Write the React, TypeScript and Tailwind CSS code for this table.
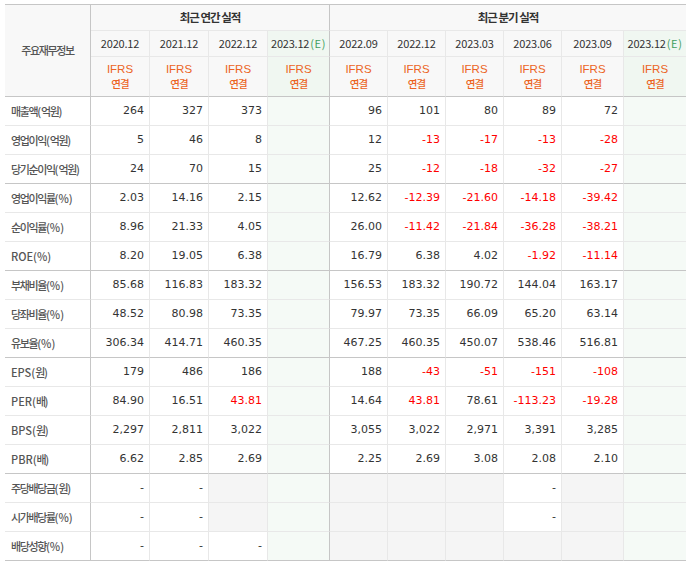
import React from "react";

type V = string | null | "G";

const rows: { label: string; v: V[]; thick?: boolean }[] = [
  { label: "매출액(억원)", v: ["264", "327", "373", null, "96", "101", "80", "89", "72", null] },
  { label: "영업이익(억원)", v: ["5", "46", "8", null, "12", "-13", "-17", "-13", "-28", null] },
  { label: "당기순이익(억원)", v: ["24", "70", "15", null, "25", "-12", "-18", "-32", "-27", null], thick: true },
  { label: "영업이익률(%)", v: ["2.03", "14.16", "2.15", null, "12.62", "-12.39", "-21.60", "-14.18", "-39.42", null] },
  { label: "순이익률(%)", v: ["8.96", "21.33", "4.05", null, "26.00", "-11.42", "-21.84", "-36.28", "-38.21", null] },
  { label: "ROE(%)", v: ["8.20", "19.05", "6.38", null, "16.79", "6.38", "4.02", "-1.92", "-11.14", null], thick: true },
  { label: "부채비율(%)", v: ["85.68", "116.83", "183.32", null, "156.53", "183.32", "190.72", "144.04", "163.17", null] },
  { label: "당좌비율(%)", v: ["48.52", "80.98", "73.35", null, "79.97", "73.35", "66.09", "65.20", "63.14", null] },
  { label: "유보율(%)", v: ["306.34", "414.71", "460.35", null, "467.25", "460.35", "450.07", "538.46", "516.81", null], thick: true },
  { label: "EPS(원)", v: ["179", "486", "186", null, "188", "-43", "-51", "-151", "-108", null] },
  { label: "PER(배)", v: ["84.90", "16.51", "43.81", null, "14.64", "43.81", "78.61", "-113.23", "-19.28", null] },
  { label: "BPS(원)", v: ["2,297", "2,811", "3,022", null, "3,055", "3,022", "2,971", "3,391", "3,285", null] },
  { label: "PBR(배)", v: ["6.62", "2.85", "2.69", null, "2.25", "2.69", "3.08", "2.08", "2.10", null], thick: true },
  { label: "주당배당금(원)", v: ["-", "-", "G", null, "G", "G", "G", "-", "G", null] },
  { label: "시가배당률(%)", v: ["-", "-", "G", null, "G", "G", "G", "-", "G", null] },
  { label: "배당성향(%)", v: ["-", "-", "-", null, "G", "G", "G", "G", "G", null], thick: true },
];

const redPositive = new Set(["10-2", "10-5"]);

const dates = ["2020.12", "2021.12", "2022.12", "2023.12", "2022.09", "2022.12", "2023.03", "2023.06", "2023.09", "2023.12"];

const KR = "font-['Noto_Sans_CJK_KR',sans-serif]";

function vBorder(i: number) {
  if (i === 3) return "border-r border-r-[#c6c6c6]";
  if (i === 9) return "";
  return "border-r border-r-[#e8e8e8]";
}

function Label({ text }: { text: string }) {
  const parts = text.split(/([가-힣]+)/).filter((p) => p.length > 0);
  return (
    <span>
      {parts.map((p, i) =>
        /[가-힣]/.test(p) ? (
          <span key={i} className="tracking-[-1.4px]">
            {p}
          </span>
        ) : (
          <span key={i} className="tracking-[0px]">
            {p}
          </span>
        )
      )}
    </span>
  );
}

export default function App() {
  return (
    <div className="bg-white w-[693px] h-[565px] pt-[4px] pl-[5px]">
      <div className="grid w-[681px] grid-cols-[86px_59px_59px_59px_62px_58px_58px_58px_58px_62px_62px] grid-rows-[26px_26px_40px_repeat(16,29px)] border-t border-t-[#c6c6c6] box-content">
        <div className={`row-span-3 bg-[#f8f8f8] border-r border-r-[#c6c6c6] border-b border-b-[#c6c6c6] flex items-center justify-center text-[#555] font-medium text-[11px] tracking-[-1.4px] ${KR}`}>
          주요재무정보
        </div>
        <div className={`col-span-4 bg-[#f8f8f8] border-r border-r-[#c6c6c6] border-b border-b-[#e8e8e8] flex items-center justify-center text-[#333] font-bold text-[11.5px] tracking-[-1px] ${KR}`}>
          최근 연간 실적
        </div>
        <div className={`col-span-6 bg-[#f8f8f8] border-b border-b-[#e8e8e8] flex items-center justify-center text-[#333] font-bold text-[11.5px] tracking-[-1px] ${KR}`}>
          최근 분기 실적
        </div>
        {dates.map((d, i) => {
          const est = i === 3 || i === 9;
          return (
            <div
              key={"d" + i}
              className={`${est ? "bg-[#f0f7f1]" : "bg-[#f8f8f8]"} ${vBorder(i)} border-b border-b-[#e8e8e8] flex items-center justify-center text-[#333] text-[11px] tracking-[-0.2px] ${KR}`}
            >
              {d}
              {est && <span className="text-[#3f9f5f] tracking-[0.6px] ml-[1px]">(E)</span>}
            </div>
          );
        })}
        {dates.map((_, i) => {
          const est = i === 3 || i === 9;
          return (
            <div
              key={"f" + i}
              className={`${est ? "bg-[#f0f7f1]" : "bg-[#f8f8f8]"} ${vBorder(i)} border-b border-b-[#c6c6c6] flex flex-col items-center justify-center text-[#ec6424]`}
            >
              <span className="block h-[13px] leading-[13px] text-[11.5px] font-['Liberation_Sans',sans-serif]">IFRS</span>
              <span className={`block h-[15px] leading-[15px] text-[10.5px] tracking-[-1px] font-medium ${KR}`}>연결</span>
            </div>
          );
        })}
        {rows.map((r, ri) => {
          const bb = r.thick ? "border-b border-b-[#c6c6c6]" : "border-b border-b-[#e8e8e8]";
          return (
            <React.Fragment key={"r" + ri}>
              <div className={`bg-white border-r border-r-[#c6c6c6] ${bb} flex items-center pl-[6px] text-[#555] font-medium text-[11px] ${KR}`}>
                <Label text={r.label} />
              </div>
              {r.v.map((val, ci) => {
                const est = ci === 3 || ci === 9;
                const bg = est ? "bg-[#f5faf6]" : val === "G" ? "bg-[#f5f5f5]" : "bg-white";
                const txt = val && val !== "G" ? val : "";
                const red =
                  (txt.startsWith("-") && txt.length > 1) || redPositive.has(`${ri}-${ci}`);
                return (
                  <div
                    key={"c" + ci}
                    className={`${bg} ${vBorder(ci)} ${bb} flex items-center justify-end pr-[5px] text-[11px] font-['DejaVu_Sans',sans-serif] ${red ? "text-[#ff0000]" : "text-[#333]"}`}
                  >
                    {txt}
                  </div>
                );
              })}
            </React.Fragment>
          );
        })}
      </div>
    </div>
  );
}
